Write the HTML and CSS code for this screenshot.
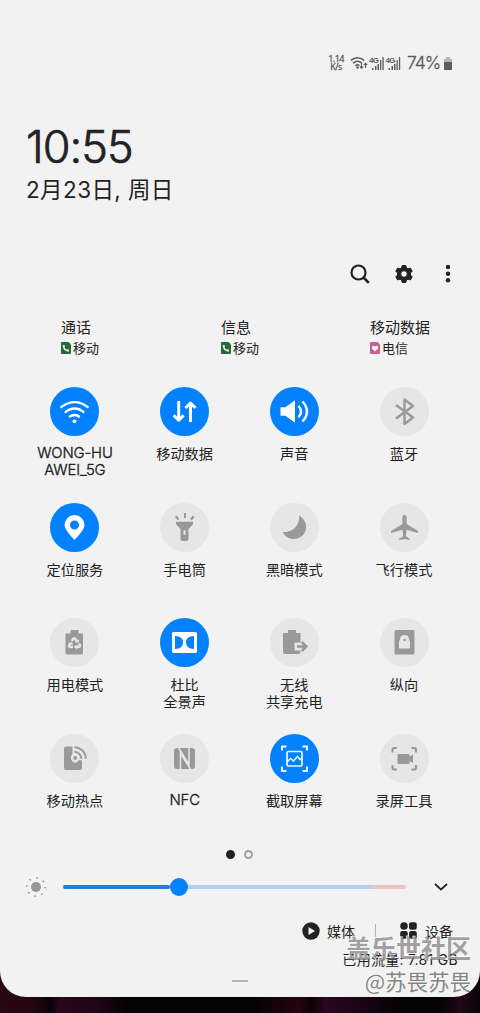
FILE: index.html
```html
<!DOCTYPE html>
<html lang="zh-CN">
<head>
<meta charset="utf-8">
<title>快捷设置</title>
<link rel="stylesheet" href="styles.css">
</head>
<body>
<main class="panel">
  <div class="status">
    <div class="speed"><span>1.14</span><span>K/s</span></div>
    <svg class="st-wifi" width="18" height="14" viewBox="0 0 18 14" fill="none" stroke="#5c5c5c" stroke-width="1.5"><path d="M.8 4.4Q7.5-1 14.2 4.4M3 7.2Q7.5 3.4 12 7.2M5.3 9.7Q7.5 7.8 9.4 9.5"/><circle cx="7.5" cy="11.5" r=".6"/><path d="M11.5 7v5M9.8 10.5l1.7 1.7 1.7-1.7M15.5 12V7.4M13.9 9l1.6-1.7L17.200 9" stroke-width="1.100"/></svg>
    <svg class="st-cell" width="32" height="15" viewBox="0 0 32 15" fill="#5c5c5c"><g id="cell"><text x="0" y="7" class="net">4G</text><path d="M3 12h1.500v2H3zM6 10h1.500v4H6zM8.500 8h1.500v6H8.500zM11 4h1.300v10H11zM13.400 1h1.300v13h-1.300z"/></g><use href="#cell" x="16.500"/></svg>
    <span class="percent">74%</span>
    <svg width="8" height="13" viewBox="0 0 8 13"><path d="M2 0h4v2h2v3H0V2h2z" fill="#b8b8b8"/><path d="M0 5h8v7q0 1-1 1H1q-1 0-1-1z" fill="#5c5c5c"/></svg>
  </div>

  <header class="clock">
    <div class="time">10:55</div>
    <div class="date">2月23日, 周日</div>
  </header>

  <nav class="tools">
    <svg width="20" height="20" viewBox="0 0 20 20" fill="none" stroke="#222" stroke-width="2.200"><circle cx="8.500" cy="8.500" r="7"/><path d="M13.500 13.500l5.300 5.300" stroke-width="2.600"/></svg>
    <svg width="18" height="20" viewBox="0 0 18 20"><path fill="#222" stroke="#222" stroke-width="1" stroke-linejoin="round" fill-rule="evenodd" d="M7.200 1.500h3.600l.6 2.400 1.600.9 2.400-.7 1.800 3.100-1.800 1.800v2l1.800 1.800-1.800 3.100-2.400-.7-1.600.9-.6 2.400H7.200l-.6-2.400-1.600-.9-2.400.7-1.800-3.100L2.600 11V9L.8 7.200l1.800-3.100 2.400.7 1.600-.9zM9 6.700a3.300 3.300 0 1 0 0 6.600 3.300 3.300 0 0 0 0-6.600z"/></svg>
    <svg width="6" height="20" viewBox="0 0 6 20" fill="#222"><circle cx="3" cy="3" r="2.200"/><circle cx="3" cy="9.700" r="2.200"/><circle cx="3" cy="16.300" r="2.200"/></svg>
  </nav>

  <section class="sims">
    <div class="sim"><div>通话</div><div class="carrier"><svg width="10" height="12" viewBox="0 0 10 12"><path d="M1 0h6.500L10 2.500V11q0 1-1 1H1q-1 0-1-1V1q0-1 1-1z" fill="#216c36"/><path d="M2.500 3.500q0 5 5.300 5.300" stroke="#fff" stroke-width="1.500" fill="none"/><path d="M2 3h1.500v2H2zM6 7.500h2v1.800H6z" fill="#fff"/></svg>移动</div></div>
    <div class="sim"><div>信息</div><div class="carrier"><svg width="10" height="12" viewBox="0 0 10 12"><path d="M1 0h6.500L10 2.500V11q0 1-1 1H1q-1 0-1-1V1q0-1 1-1z" fill="#216c36"/><path d="M2.500 3.500q0 5 5.300 5.300" stroke="#fff" stroke-width="1.500" fill="none"/><path d="M2 3h1.500v2H2zM6 7.500h2v1.800H6z" fill="#fff"/></svg>移动</div></div>
    <div class="sim"><div>移动数据</div><div class="carrier"><svg width="10" height="12" viewBox="0 0 10 12"><path d="M1 0h6.500L10 2.500V11q0 1-1 1H1q-1 0-1-1V1q0-1 1-1z" fill="#ca5f94"/><path d="M5 9.600L2 6.500Q1.400 4 3.400 3.700 4.600 3.800 5 4.800 5.400 3.800 6.600 3.700 8.600 4 8 6.500z" fill="#fff"/></svg>电信</div></div>
  </section>

  <section class="tiles">
    <div class="tile on"><svg viewBox="0 0 49 49" fill="none" stroke="#fff" stroke-width="2.300"><path d="M10.500 20.700Q24.500 9.500 38.500 20.700M14.800 25.600Q24.500 17.500 34.200 25.600M19.200 30Q24.500 26 29.800 30"/><circle cx="24.500" cy="34.300" r="1.900" fill="#fff" stroke="none"/></svg><span class="latin">WONG-HU<br>AWEI_5G</span></div>
    <div class="tile on"><svg viewBox="0 0 49 49" fill="none" stroke="#fff" stroke-width="3" stroke-linejoin="round"><path d="M18.700 14v19M13.700 28.200l5 5 5-5M30.500 35V16M25.500 21l5-5 5 5"/></svg><span>移动数据</span></div>
    <div class="tile on"><svg viewBox="0 0 49 49" fill="#fff"><path d="M10.500 20.300h4.800L25 13.300v22.500l-9.700-7h-4.800z"/><path d="M28.500 18.700q5 5.800 0 11.600M32.500 14.500q9 10 0 20" fill="none" stroke="#fff" stroke-width="2.400"/></svg><span>声音</span></div>
    <div class="tile"><svg viewBox="0 0 49 49" fill="none" stroke="#999" stroke-width="2.400" stroke-linejoin="round"><path d="M16 18l17 12.500-8.500 6.500V12.500L33 19 16 31.500"/></svg><span>蓝牙</span></div>

    <div class="tile on"><svg viewBox="0 0 49 49" fill="#fff"><path fill-rule="evenodd" d="M24.500 12a10 10 0 0 1 10 10q0 4.500-10 15-10-10.500-10-15a10 10 0 0 1 10-10zm0 5.500a4.500 4.500 0 1 0 0 9 4.500 4.500 0 0 0 0-9z"/></svg><span>定位服务</span></div>
    <div class="tile"><svg viewBox="0 0 49 49" fill="#999"><path d="M24 10h2v5h-2zM15 14l1.700-1.400 2.600 3.200-1.600 1.400zM34.500 14l-1.700-1.400-2.600 3.200 1.600 1.400z"/><path fill-rule="evenodd" d="M16 18.700h17v2.600L28.500 26v10q0 2-2 2h-4q-2 0-2-2V26L16 21.300zM23.500 27.300v4.400h2v-4.400z"/></svg><span>手电筒</span></div>
    <div class="tile"><svg viewBox="0 0 49 49" fill="#999"><path d="M29.200 12.500c4 2.200 6.900 6.500 6.900 11.200 0 7-5.600 12.300-12.400 12.300-4.800 0-8.900-2.500-11-7 9.500.8 17.300-6 16.500-16.500z"/></svg><span>黑暗模式</span></div>
    <div class="tile"><svg viewBox="0 0 49 49" fill="#999"><path d="M22.400 13.500Q24.500 10 26.600 13.500V21L38 28v2l-11.400-3.200-.8 6.500 4 2.500V37l-5.300-1-5.300 1v-1.200l4-2.500-.8-6.500L11 30v-2l11.400-7z"/></svg><span>飞行模式</span></div>

    <div class="tile"><svg viewBox="0 0 49 49"><path fill="#999" d="M20.500 12h8v3.500h4.500v19q0 2-2 2H17.500q-2 0-2-2v-19h5z"/><g fill="none" stroke="#e6e6e6" stroke-width="2.400"><path d="M21.700 23l1.600-2.200q1-1.200 2 0L27.200 24M29 25.500l1 1.800q.3 1.700-1.200 1.700H26.500M23 29h-2.800q-1.600-.2-1-1.700l1.300-2.300"/></g><path fill="#e6e6e6" d="M25 24.300l3.800.4.300-3.700zM27 26.300v5.200l-3-2.600zM18.500 24.800l3.800-.6.500 3.600z"/></svg><span>用电模式</span></div>
    <div class="tile on"><svg viewBox="0 0 49 49"><path fill="#fff" fill-rule="evenodd" d="M13.500 14h22q1.500 0 1.500 1.500v18q0 1.500-1.500 1.500h-22Q12 35 12 33.500v-18Q12 14 13.500 14zM15 18v13q8 0 8-6.500T15 18zM34 18v13q-8 0-8-6.500T34 18z"/></svg><span>杜比<br>全景声</span></div>
    <div class="tile"><svg viewBox="0 0 49 49"><path fill="#999" d="M18 12h8v3h4.500v9.500h-6v8h6v1.500q0 2-2 2H15q-2 0-2-2V15h5z"/><path d="M27 28.500h9M31.800 24l4.500 4.500-4.500 4.500" fill="none" stroke="#999" stroke-width="2.700"/></svg><span>无线<br>共享充电</span></div>
    <div class="tile"><svg viewBox="0 0 49 49"><rect x="14.500" y="12" width="20" height="24.500" rx="1.500" fill="#999"/><path d="M19 22.500h11v8H19z" fill="#e6e6e6"/><path d="M20.700 23v-1.500q0-3.700 3.800-3.700t3.800 3.700V23" fill="#e6e6e6" stroke="#e6e6e6" stroke-width="1.500"/><circle cx="24.500" cy="22" r="1.300" fill="#999"/></svg><span>纵向</span></div>

    <div class="tile"><svg viewBox="0 0 49 49"><path fill="#999" d="M16 12.500h6.500V20a4.500 4.500 0 0 0-1.500 3.500v2l2.500 3h3l2.500-2.300h3V34q0 2-2 2H16q-2 0-2-2V14.500q0-2 2-2z"/><g fill="none" stroke="#999" stroke-width="1.900"><path d="M24.500 13.200a11.500 11.500 0 0 1 11.300 11.600M24.500 17.800a7 7 0 0 1 6.800 7"/></g><circle cx="25.200" cy="24" r="1.900" fill="#999"/></svg><span>移动热点</span></div>
    <div class="tile"><svg viewBox="0 0 49 49"><rect x="14" y="14" width="21" height="21" rx="3" fill="#999"/><path d="M18.700 14L29 30.500V14M20.500 35V19.500L30.500 35" fill="none" stroke="#e6e6e6" stroke-width="1.500"/></svg><span class="latin">NFC</span></div>
    <div class="tile on"><svg viewBox="0 0 49 49" fill="none" stroke="#e9fbff" stroke-width="2"><path d="M12 16.500V12.500h4.500M32.500 12.500H37v4M37 32.500v4.500h-4.500M16.500 37H12v-4.500"/><rect x="17" y="17.500" width="15" height="14.500" rx="1.500" stroke-width="1.700"/><path d="M17 28l3.500-3.500 3 2.500 4-4.500 2.500 3 2-2" stroke-width="1.600"/></svg><span>截取屏幕</span></div>
    <div class="tile"><svg viewBox="0 0 49 49" fill="none" stroke="#999" stroke-width="2.200"><path d="M12.500 18.500V16q0-2 2-2H17M31.500 14H34q2 0 2 2v2.500M36 31v2.500q0 2-2 2h-2.500M17 35.500h-2.500q-2 0-2-2V31"/><path d="M18.500 20h10q1 0 1 1v1.500l3.500-2v8.500l-3.500-2v2q0 1-1 1h-10q-1 0-1-1v-8q0-1 1-1z" fill="#999" stroke="none"/></svg><span>录屏工具</span></div>
  </section>

  <div class="pager"><i class="dot current"></i><i class="dot"></i></div>

  <div class="brightness">
    <svg width="22" height="22" viewBox="0 0 22 22" fill="#969696"><circle cx="11" cy="11" r="5"/><circle cx="11" cy="11" r="9.200" fill="none" stroke="#999" stroke-width="1.800" stroke-dasharray="1.500 5.725"/></svg>
    <div class="track"><div class="fill"></div><div class="knob"></div></div>
    <svg width="14" height="8" viewBox="0 0 14 8" fill="none" stroke="#222" stroke-width="1.700"><path d="M1 1l6 5.500L13 1"/></svg>
  </div>

  <div class="links">
    <svg width="18" height="18" viewBox="0 0 18 18"><circle cx="9" cy="9" r="8.700" fill="#222"/><path d="M6.500 5l6.500 4-6.500 4z" fill="#f2f2f2"/></svg>
    <span class="media">媒体</span>
    <i class="divider"></i>
    <svg width="17" height="17" viewBox="0 0 17 17" fill="#222"><circle cx="4" cy="4" r="3.800"/><rect x="9" y=".2" width="7.800" height="7.600" rx="2.200"/><rect x=".2" y="9" width="7.600" height="7.800" rx="2.200"/><rect x="9" y="9" width="7.800" height="7.800" rx="2.200"/></svg>
    <span class="device">设备</span>
  </div>
  <div class="usage">已用流量: 7.81 GB</div>
  <div class="handle"></div>
</main>
<div class="mark mark-site">盖乐世社区</div>
<div class="mark mark-user">@苏畏苏畏</div>
</body>
</html>
```
FILE: styles.css
```css
* { box-sizing: border-box; }
body {
  margin: 0;
  width: 480px;
  height: 1013px;
  overflow: hidden;
  position: relative;
  font-family: Inter, "Noto Sans CJK SC", sans-serif;
  color: #222;
  background: linear-gradient(90deg, #2b0712 0, #22060f 35px, #0a0306 50px, #2a061c 60px, #1f0516 100px, #040203 125px, #050203 250px, #24030f 300px, #0b0205 312px, #2b0620 325px, #1c0415 360px, #050304 400px, #050304 440px, #230618 460px, #0a0305 480px);
}
svg { display: block; flex: none; }
.panel {
  height: 997px;
  background: #f2f2f2;
  border-radius: 0 0 26px 26px;
  display: flex;
  flex-direction: column;
}
.status {
  height: 30px;
  margin: 48px 28px 0 0;
  display: flex;
  align-items: center;
  justify-content: flex-end;
  color: #5c5c5c;
}
.speed {
  display: flex;
  flex-direction: column;
  align-items: center;
  font: 9px/8px "Open Sans", sans-serif;
  letter-spacing: -.5px;
  margin-right: 6px;
  -webkit-text-stroke: .3px #5c5c5c;
}
.st-wifi { margin-right: 1px; }
.net { font: bold 8px "Liberation Sans", sans-serif; letter-spacing: -.8px; }
.percent { font: 300 17.500px/30px Inter, sans-serif; width: 33px; margin: 0 4px 0 6px; letter-spacing: -1px; -webkit-text-stroke: .3px #5c5c5c; }
.clock { padding-left: 26px; margin-top: 42px; }
.time { font-size: 45px; font-weight: 300; line-height: 54px; letter-spacing: -1px; -webkit-text-stroke: .7px #222; }
.date { font-size: 22.500px; line-height: 32px; letter-spacing: .4px; white-space: nowrap; }
.tools {
  display: flex;
  align-items: center;
  gap: 25px;
  justify-content: flex-end;
  padding-right: 29px;
  margin-top: 58px;
}
.tools svg:last-child { margin-left: 7px; }
.sims {
  display: grid;
  grid-template-columns: 160px 149px 1fr;
  padding-left: 61px;
  margin-top: 34px;
  font-size: 15px;
  line-height: 20px;
}
.carrier { display: flex; align-items: center; gap: 2px; font-size: 13px; }
.tiles {
  display: grid;
  grid-template-columns: repeat(4, 109.7px);
  grid-auto-rows: 115.7px;
  padding-left: 20.100px;
  margin-top: 29px;
}
.tile { display: flex; flex-direction: column; align-items: center; gap: 9px; text-align: center; }
.tile svg { width: 49px; height: 49px; border-radius: 50%; background: #e6e6e6; }
.tile.on svg { background: #0381fe; }
.tile span { font-size: 14.200px; line-height: 17px; white-space: nowrap; }
.tile .latin { font-size: 14.800px; font-weight: 300; letter-spacing: -.1px; -webkit-text-stroke: .35px #222; }
.pager { display: flex; justify-content: center; gap: 9px; padding-right: 1px; }
.dot { width: 9px; height: 9px; border-radius: 50%; border: 2px solid #a0a0a0; }
.current { border-color: #222; background: #222; }
.brightness { display: flex; align-items: center; height: 22px; margin-top: 17px; padding-left: 25px; }
.track {
  width: 343px;
  height: 4px;
  margin: 0 28px 0 16px;
  border-radius: 2px;
  display: flex;
  align-items: center;
  background: linear-gradient(90deg, #b0cfec 308px, #efc3c1 308px);
}
.fill { width: 107px; height: 4px; background: #2080dc; border-radius: 2px; }
.knob { width: 18px; height: 18px; border-radius: 50%; background: #0381fe; }
.links { display: flex; align-items: center; height: 22px; margin-top: 22px; padding-left: 302px; font-size: 14px; }
.media { margin-left: 7px; }
.divider { width: 1px; height: 13px; background: #b0b0b0; margin: 0 24px 0 20px; }
.device { margin-left: 8px; }
.usage { font-size: 14px; line-height: 20px; letter-spacing: .3px; margin-top: 8px; padding-right: 22px; text-align: right; white-space: nowrap; }
.handle { width: 16px; height: 2px; background: #b5b5b5; margin: 10px auto 0; }
.mark { position: absolute; right: 9px; font-family: "Noto Sans CJK SC", sans-serif; white-space: nowrap; text-shadow: -1px -1px 0 rgba(255,255,255,.8); }
.mark-site { top: 931px; font-size: 25px; line-height: 32px; color: rgba(100,100,100,.6); font-weight: 700; }
.mark-user { top: 967px; font-size: 21.500px; line-height: 28px; color: #858585; }
```
